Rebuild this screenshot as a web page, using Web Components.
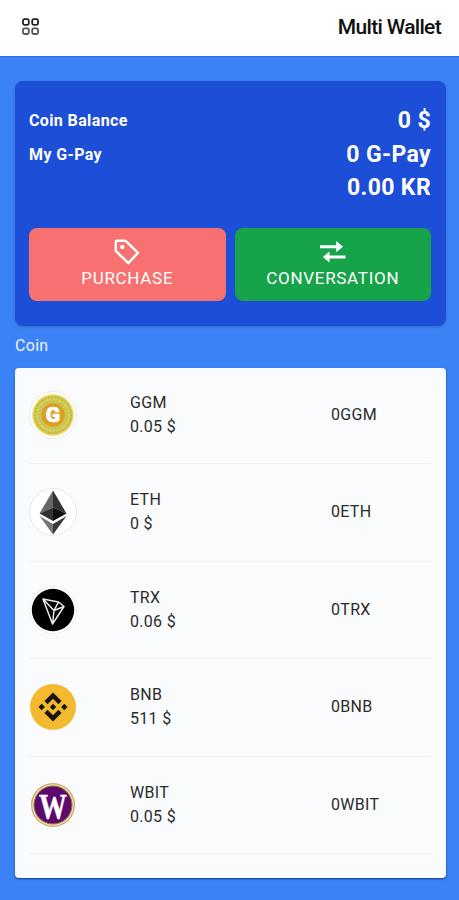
<!DOCTYPE html>
<html lang="en">
<head>
<meta charset="utf-8">
<meta name="viewport" content="width=device-width, initial-scale=1">
<title>Multi Wallet</title>
<style>
    body {
        margin: 0;
        background: #3b82f6;
        font-family: Roboto, "Liberation Sans", sans-serif;
    }
</style>
</head>
<body>
<wallet-app></wallet-app>

<script>
const COIN_ICONS = {
    GGM: `
        <circle cx="24" cy="24" r="23.5" fill="#fff" stroke="#e8e9ec"/>
        <circle cx="24" cy="24" r="21" fill="#f8e37c"/>
        <circle cx="24" cy="24" r="19.7" fill="#d0c750"/>
        <circle cx="24" cy="24" r="18" fill="none" stroke="#b5b148" stroke-width="1.2" stroke-dasharray="1 2.3 2 1.6"/>
        <circle cx="24" cy="24" r="15.8" fill="none" stroke="#e2d878" stroke-width="1.2" stroke-dasharray="2 1.5 1 2.2"/>
        <circle cx="24" cy="24" r="13.8" fill="none" stroke="#b9b34a" stroke-width="1" stroke-dasharray="1 2.6"/>
        <circle cx="24" cy="24" r="11.8" fill="#d9a024"/>
        <text x="24" y="31.3" text-anchor="middle" font-family="Roboto, sans-serif" font-weight="900" font-size="21" fill="#fff" stroke="#fff" stroke-width=".7">G</text>`,
    ETH: `
        <circle cx="24" cy="24" r="23.5" fill="#fff" stroke="#e6e7ea"/>
        <path d="M24 2.5 10.5 25.5 24 19.5z" fill="#666"/>
        <path d="M24 2.5 37.5 25.5 24 19.5z" fill="#333"/>
        <path d="M10.5 25.5 24 19.5V33z" fill="#333"/>
        <path d="M37.5 25.5 24 19.5V33z" fill="#111"/>
        <path d="M10.5 28 24 36v10.5z" fill="#777"/>
        <path d="M37.5 28 24 36v10.5z" fill="#3a3a3a"/>`,
    TRX: `
        <circle cx="24" cy="24" r="23.5" fill="#fff" stroke="#eeeff2"/>
        <circle cx="24" cy="24" r="21.2" fill="#000"/>
        <path d="M14 13 29.5 16 35 20.5 23.5 38zM14 13 25 24.5 23.5 38M25 24.5 35 20.5M25 24.5 29.5 16" fill="none" stroke="#e9e9e9" stroke-width="1.5" stroke-linejoin="round"/>`,
    BNB: `
        <circle cx="24" cy="24" r="23" fill="#f3ba2f"/>
        <g fill="#181510">
            <path d="M24 9.5 32.6 18 29.4 21.2 24 15.8 18.6 21.2 15.4 18z"/>
            <path d="M24 38.5 32.6 30 29.4 26.8 24 32.2 18.6 26.8 15.4 30z"/>
            <path d="M24 20.8 27.2 24 24 27.2 20.8 24z"/>
            <path d="M12.7 20.8 15.9 24 12.7 27.2 9.5 24z"/>
            <path d="M35.3 20.8 38.5 24 35.3 27.2 32.1 24z"/>
        </g>`,
    WBIT: `
        <circle cx="24" cy="24" r="22" fill="#c9a66a"/>
        <circle cx="24" cy="24" r="20.8" fill="#efdfb4"/>
        <circle cx="24" cy="24" r="19" fill="#5d0a6d" stroke="#94703c" stroke-width="1"/>
        <text x="24" y="37.5" text-anchor="middle" textLength="28" lengthAdjust="spacingAndGlyphs" font-family="Liberation Serif, serif" font-weight="bold" font-size="36" fill="#fff" stroke="#fff" stroke-width=".5">W</text>`
};

class WalletHeader extends HTMLElement {
    constructor() {
        super();
        this.attachShadow({mode: 'open'});
        this.shadowRoot.innerHTML = `
            <style>
                :host {
                    display: flex;
                    align-items: center;
                    justify-content: space-between;
                    box-sizing: border-box;
                    height: 57px;
                    padding: 0 18px 3px 21px;
                    background: #fff;
                    border-bottom: 1px solid #2876dc;
                    color: #111;
                    font-size: 21px;
                    font-weight: 500;
                    letter-spacing: -0.68px;
                }

                svg {
                    display: block;
                }
            </style>
            <svg width="19" height="18" viewBox="0 0 19 18" fill="none" stroke-width="1.8">
                <g stroke="#222">
                    <rect x="2" y="1.2" width="5.8" height="5.6" rx="1.5"/>
                    <rect x="11.2" y="1.2" width="5.8" height="5.6" rx="1.5"/>
                </g>
                <g stroke="#555">
                    <rect x="2" y="10.4" width="5.8" height="5.6" rx="1.5"/>
                    <rect x="11.2" y="10.4" width="5.8" height="5.6" rx="1.5"/>
                </g>
            </svg>
            <slot></slot>
            `;
    }
}

customElements.define('wallet-header', WalletHeader);

class ActionButton extends HTMLElement {
    constructor() {
        super();
        this.attachShadow({mode: 'open'});
        this.shadowRoot.innerHTML = `
            <style>
                :host {
                    display: block;
                }

                button {
                    display: flex;
                    flex-direction: column;
                    align-items: center;
                    width: 100%;
                    height: 73px;
                    padding: 10px 0 0;
                    border: 0;
                    border-radius: 8px;
                    background: var(--action-color);
                    color: #fff;
                    font: 400 17px/24px Roboto, "Liberation Sans", sans-serif;
                    letter-spacing: 0.7px;
                }
            </style>
            <button>
                <slot name="icon"></slot>
                <slot></slot>
            </button>
            `;
    }
}

customElements.define('action-button', ActionButton);

class BalanceCard extends HTMLElement {
    constructor() {
        super();
        this.attachShadow({mode: 'open'});
        this.shadowRoot.innerHTML = `
            <style>
                :host {
                    display: block;
                    box-sizing: border-box;
                    height: 245px;
                    padding: 23px 15px 0 14px;
                    border-radius: 8px;
                    background: #1d4ed8;
                    box-shadow: 0 1px 3px rgba(0,0,0,0.2);
                    color: #fff;
                    font-weight: 700;
                }

                .line {
                    display: flex;
                    justify-content: space-between;
                    align-items: center;
                    height: 33.5px;
                    font-size: 16px;
                    letter-spacing: 0.38px;
                }

                .value {
                    margin-left: auto;
                    font-size: 23px;
                }

                .actions {
                    display: grid;
                    grid-template-columns: 1fr 1fr;
                    gap: 9px;
                    margin-top: 23.5px;
                }

                #purchase {
                    --action-color: #f87171;
                }

                #conversation {
                    --action-color: #16a34a;
                }

                svg {
                    display: block;
                }
            </style>
            <div class="line"><span>Coin Balance</span><span class="value">0 $</span></div>
            <div class="line"><span>My G-Pay</span><span class="value">0 G-Pay</span></div>
            <div class="line"><span class="value">0.00 KR</span></div>
            <div class="actions">
                <action-button id="purchase">
                    <svg slot="icon" width="28" height="28" viewBox="0 0 28 28">
                        <path d="M2.8 3.8Q2.8 2.8 3.8 2.8H12.7L25 14.8 15.3 25.2 2.8 12.9z" fill="none" stroke="#fff" stroke-width="2.5" stroke-linejoin="round"/>
                        <circle cx="9.3" cy="8.9" r="2.2" fill="#fff"/>
                    </svg>
                    PURCHASE
                </action-button>
                <action-button id="conversation">
                    <svg slot="icon" width="28" height="28" viewBox="0 0 28 28" fill="#fff">
                        <path d="M1 7.3H17.2V3L24 8.7 17.2 14.2V10.2H1z"/>
                        <path d="M26.5 17.6H10.5V13.6L3.8 19 10.5 24.6V20.5H26.5z"/>
                    </svg>
                    CONVERSATION
                </action-button>
            </div>
            `;
    }
}

customElements.define('balance-card', BalanceCard);

class CoinRow extends HTMLElement {
    constructor() {
        super();
        this.attachShadow({mode: 'open'});
    }

    connectedCallback() {
        const symbol = this.getAttribute('symbol');
        this.shadowRoot.innerHTML = `
            <style>
                :host {
                    display: grid;
                    grid-template-columns: 101px 201px 1fr;
                    align-items: center;
                    padding-bottom: 24.4px;
                    border-bottom: 1px solid #f0f2f4;
                    color: #2b2b2b;
                    font-size: 16px;
                    line-height: 24px;
                    letter-spacing: 0.3px;
                }

                svg {
                    display: block;
                }
            </style>
            <svg width="48" height="48" viewBox="0 0 48 48">${COIN_ICONS[symbol]}</svg>
            <div>
                <div>${symbol}</div>
                <div>${this.getAttribute('price')} $</div>
            </div>
            <div>${this.getAttribute('amount')}${symbol}</div>
            `;
    }
}

customElements.define('coin-row', CoinRow);

class CoinList extends HTMLElement {
    constructor() {
        super();
        this.attachShadow({mode: 'open'});
        this.shadowRoot.innerHTML = `
            <style>
                :host {
                    display: flex;
                    flex-direction: column;
                    gap: 24px;
                    box-sizing: border-box;
                    height: 510px;
                    padding: 23px 15px 0 14px;
                    border-radius: 4px;
                    background: #fafbfc;
                    box-shadow: 0 1px 2px rgba(0,20,90,0.7);
                }
            </style>
            <slot></slot>
            `;
    }
}

customElements.define('coin-list', CoinList);

class WalletApp extends HTMLElement {
    constructor() {
        super();
        this.attachShadow({mode: 'open'});
        this.shadowRoot.innerHTML = `
            <style>
                :host {
                    display: block;
                    box-sizing: border-box;
                    height: 900px;
                    background: #3b82f6;
                }

                main {
                    padding: 24px 13px 0 15px;
                }

                h2 {
                    margin: 0;
                    padding-top: 8px;
                    height: 34px;
                    color: #eef4ff;
                    font-size: 16px;
                    font-weight: 400;
                    line-height: 24px;
                    letter-spacing: 0.3px;
                }
            </style>
            <wallet-header>Multi Wallet</wallet-header>
            <main>
                <balance-card></balance-card>
                <h2>Coin</h2>
                <coin-list>
                    <coin-row symbol="GGM" price="0.05" amount="0"></coin-row>
                    <coin-row symbol="ETH" price="0" amount="0"></coin-row>
                    <coin-row symbol="TRX" price="0.06" amount="0"></coin-row>
                    <coin-row symbol="BNB" price="511" amount="0"></coin-row>
                    <coin-row symbol="WBIT" price="0.05" amount="0"></coin-row>
                </coin-list>
            </main>
            `;
    }
}

customElements.define('wallet-app', WalletApp);
</script>
</body>
</html>
